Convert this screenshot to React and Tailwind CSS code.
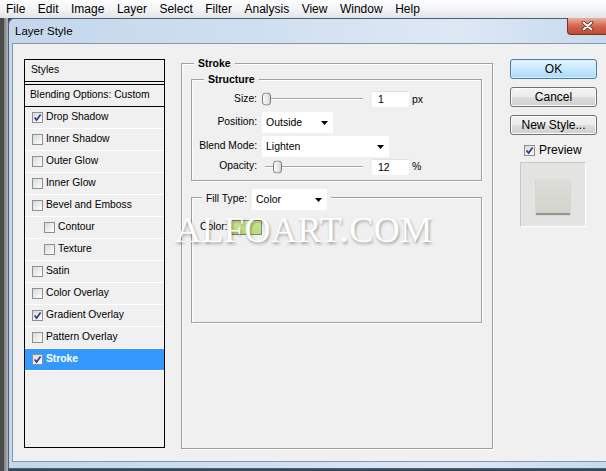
import React from "react";

const Check = ({ checked }) => (
  <span className="w-[11px] h-[11px] shrink-0 border border-[#8e8f8f] bg-gradient-to-br from-[#d9d9d9] to-white flex items-center justify-center">
    {checked && (
      <svg width="9" height="9" viewBox="0 0 9 9">
        <path d="M1.6 4.4 L3.6 7 L7.6 1.4" fill="none" stroke="#2b3f91" strokeWidth="1.7" />
      </svg>
    )}
  </span>
);

const Thumb = () => (
  <svg width="9" height="13" viewBox="0 0 9 13">
    <defs>
      <linearGradient id="tg" x1="0" y1="0" x2="1" y2="0">
        <stop offset="0" stopColor="#ffffff" />
        <stop offset="1" stopColor="#d4d4d4" />
      </linearGradient>
    </defs>
    <rect x="0.5" y="0.5" width="8" height="12" rx="3" fill="url(#tg)" stroke="#7a7a7a" />
  </svg>
);

const Slider = ({ thumb }) => (
  <div className="relative w-[101px] h-full">
    <div className="absolute left-[3px] right-0 top-[7px] h-[2px] border-t border-[#a6a6a6] border-b border-b-white" />
    <div className={`absolute top-1/2 -translate-y-1/2 flex ${thumb}`}>
      <Thumb />
    </div>
  </div>
);

const Arrow = () => (
  <svg width="7" height="4" viewBox="0 0 7 4">
    <path d="M0 0H7L3.5 4Z" fill="#000" />
  </svg>
);

const Select = ({ w, text }) => (
  <div className={`${w} h-[21px] shrink-0 bg-white flex items-center justify-between pl-[4px] pr-[5px] text-[10.5px] leading-none`}>
    <span>{text}</span>
    <Arrow />
  </div>
);

const Input = ({ value }) => (
  <div className="w-[37px] h-[16px] shrink-0 bg-white border-t border-[#e2e2e2] flex items-center pl-[6px] text-[10.5px] leading-none">
    {value}
  </div>
);

const items = [
  { t: "Drop Shadow", c: true },
  { t: "Inner Shadow" },
  { t: "Outer Glow" },
  { t: "Inner Glow" },
  { t: "Bevel and Emboss" },
  { t: "Contour", sub: true },
  { t: "Texture", sub: true },
  { t: "Satin" },
  { t: "Color Overlay" },
  { t: "Gradient Overlay", c: true },
  { t: "Pattern Overlay" },
  { t: "Stroke", c: true, sel: true },
];

const Btn = ({ children, primary }) => (
  <div
    className={
      primary
        ? "w-[87px] h-[20px] rounded-[3px] border border-[#3c7fb1] bg-gradient-to-b from-[#e6f5fd] via-[#c9e9fc] to-[#a9daf8] shadow-[inset_0_0_0_1px_#d6efff] flex items-center justify-center text-[12px] leading-none"
        : "w-[87px] h-[20px] rounded-[3px] border border-[#707070] bg-[linear-gradient(180deg,#f3f3f3_0%,#ebebeb_50%,#dddddd_51%,#cfcfcf_100%)] shadow-[inset_0_0_0_1px_#fcfcfc] flex items-center justify-center text-[12px] leading-none"
    }
  >
    {children}
  </div>
);

export default function App() {
  const menu = ["File", "Edit", "Image", "Layer", "Select", "Filter", "Analysis", "View", "Window", "Help"];
  return (
    <div className="w-[606px] h-[471px] overflow-hidden flex flex-col font-['Liberation_Sans',Arial,sans-serif] text-black bg-[#34495a]">
      <div className="h-[18px] shrink-0 flex items-center gap-[12.5px] pl-[6px] text-[12px] leading-none bg-gradient-to-b from-[#fdfdfd] via-[#f3f4f6] to-[#e1e4e8]">
        {menu.map((m) => (
          <span key={m}>{m}</span>
        ))}
      </div>
      <div className="flex flex-1 min-h-0">
        <div className="w-[8px] shrink-0 flex">
          <div className="w-[4px] bg-[#4b4b4b]" />
          <div className="w-[4px] bg-gradient-to-r from-[#7d7d7d] to-[#b4b9bf]" />
        </div>
        <div className="flex-1 min-w-0 flex flex-col mb-[2px] rounded-tl-[6px] border-l border-t border-b border-[#4d6176] bg-[linear-gradient(90deg,#c3d6eb,#d1e0f0_45%,#dde8f5_75%,#c6d9ee)]">
          <div className="h-[24px] shrink-0 flex items-start">
            <span className="pl-[6px] pt-[6px] text-[11.5px] leading-[13px]">Layer Style</span>
            <div className="ml-auto -mt-[1px] w-[39px] h-[17px] rounded-bl-[4px] border-l border-b border-[#7a3325] bg-gradient-to-b from-[#eab0a3] via-[#d3664f] to-[#c04a32] flex items-center justify-center">
              <svg width="13" height="10" viewBox="0 0 13 10">
                <path d="M2.5 1.5 L10.5 8.5 M10.5 1.5 L2.5 8.5" stroke="#5b2218" strokeWidth="3.6" strokeLinecap="round" />
                <path d="M2.5 1.5 L10.5 8.5 M10.5 1.5 L2.5 8.5" stroke="#ffffff" strokeWidth="2" strokeLinecap="round" />
              </svg>
            </div>
          </div>

          <div className="flex-1 min-h-0 ml-[3px] border-l border-t border-b border-[#8497ad] bg-[#f0f0f0] relative flex items-start pl-[11px] pt-[15px]">
            {/* Styles list */}
            <div className="w-[141px] h-[389px] shrink-0 border border-black bg-[#f0f0f0] flex flex-col text-[10.3px] leading-none">
              <div className="h-[22px] shrink-0 border-b border-black flex items-center pl-[6px]">Styles</div>
              <div className="h-[3px] shrink-0 border-b border-black" />
              <div className="h-[22px] shrink-0 border-b border-black flex items-center pl-[5px]">Blending Options: Custom</div>
              {items.map((it) => (
                <div
                  key={it.t}
                  className={`h-[22px] shrink-0 border-b border-white flex items-center gap-[3px] ${it.sub ? "pl-[19px]" : "pl-[7px]"} ${it.sel ? "bg-[#3399ff] text-white font-bold" : ""}`}
                >
                  <Check checked={it.c} />
                  <span>{it.t}</span>
                </div>
              ))}
            </div>

            {/* Stroke group */}
            <div className="ml-[16px] mt-[4px] w-[312px] h-[386px] shrink-0 border border-[#a0a0a0] shadow-[1px_1px_0_#fff,inset_1px_1px_0_#fff] flex flex-col">
              <div className="-mt-[7px] ml-[12px] px-[4px] w-fit bg-[#f0f0f0] text-[10.5px] leading-[13px] font-bold">Stroke</div>

              {/* Structure */}
              <div className="ml-[9px] mt-[9px] w-[291px] h-[102px] shrink-0 border border-[#a0a0a0] shadow-[1px_1px_0_#fff,inset_1px_1px_0_#fff] flex flex-col text-[10.3px] leading-none">
                <div className="-mt-[7px] ml-[12px] px-[4px] w-fit bg-[#f0f0f0] text-[10.5px] leading-[13px] font-bold">Structure</div>
                <div className="mt-[5px] h-[16px] flex items-center">
                  <span className="w-[65px] text-right shrink-0">Size:</span>
                  <div className="ml-[5px] h-full">
                    <Slider thumb="left-[0px]" />
                  </div>
                  <div className="ml-[9px]">
                    <Input value="1" />
                  </div>
                  <span className="ml-[3px] text-[10.5px]">px</span>
                </div>
                <div className="mt-[5px] h-[21px] flex items-center">
                  <span className="w-[65px] text-right shrink-0">Position:</span>
                  <div className="ml-[5px]">
                    <Select w="w-[71px]" text="Outside" />
                  </div>
                </div>
                <div className="mt-[3px] h-[21px] flex items-center">
                  <span className="w-[65px] text-right shrink-0">Blend Mode:</span>
                  <div className="ml-[5px]">
                    <Select w="w-[127px]" text="Lighten" />
                  </div>
                </div>
                <div className="mt-[1px] h-[17px] flex items-center">
                  <span className="w-[65px] text-right shrink-0">Opacity:</span>
                  <div className="ml-[5px] h-[16px]">
                    <Slider thumb="left-[11px]" />
                  </div>
                  <div className="ml-[9px]">
                    <Input value="12" />
                  </div>
                  <span className="ml-[3px] text-[10.5px]">%</span>
                </div>
              </div>

              {/* Fill Type */}
              <div className="ml-[9px] mt-[16px] w-[291px] h-[126px] shrink-0 border border-[#a0a0a0] shadow-[1px_1px_0_#fff,inset_1px_1px_0_#fff] flex flex-col text-[10.3px] leading-none">
                <div className="-mt-[9px] ml-[10px] px-[4px] w-fit bg-[#f0f0f0] flex items-center gap-[5px]">
                  <span>Fill Type:</span>
                  <Select w="w-[75px]" text="Color" />
                </div>
                <div className="mt-[10px] ml-[8px] flex items-center gap-[4px]">
                  <span>Color:</span>
                  <div className="w-[31px] h-[15px] border border-[#7f8c72] bg-gradient-to-b from-[#c9e48e] to-[#bcd97e]" />
                </div>
              </div>
            </div>

            {/* Buttons */}
            <div className="ml-[17px] flex flex-col shrink-0">
              <div className="flex flex-col gap-[8px]">
                <Btn primary>OK</Btn>
                <Btn>Cancel</Btn>
                <Btn>New Style...</Btn>
              </div>
              <div className="mt-[9px] ml-[14px] h-[12px] flex items-center gap-[4px] text-[12px] leading-none">
                <Check checked />
                <span>Preview</span>
              </div>
              <div className="mt-[6px] ml-[10px] w-[66px] h-[65px] border border-[#c9c9c9] border-r-white border-b-white bg-[#e3e3e1] flex items-center justify-center">
                <div className="w-[34px] h-[34px] mt-[2px] bg-gradient-to-b from-[#dcded7] to-[#d2d4cc] shadow-[0_2px_1px_rgba(0,0,0,0.35)]" />
              </div>
            </div>

            {/* watermark */}
            <div className="absolute left-[162px] top-[168px] font-['Liberation_Serif',serif] text-[36px] leading-none tracking-[0.5px] text-white [text-shadow:1px_2px_3px_rgba(0,0,0,0.35)] pointer-events-none">
              ALFOART.COM
            </div>
          </div>

          <div className="h-[6px] shrink-0" />
        </div>
      </div>
    </div>
  );
}
